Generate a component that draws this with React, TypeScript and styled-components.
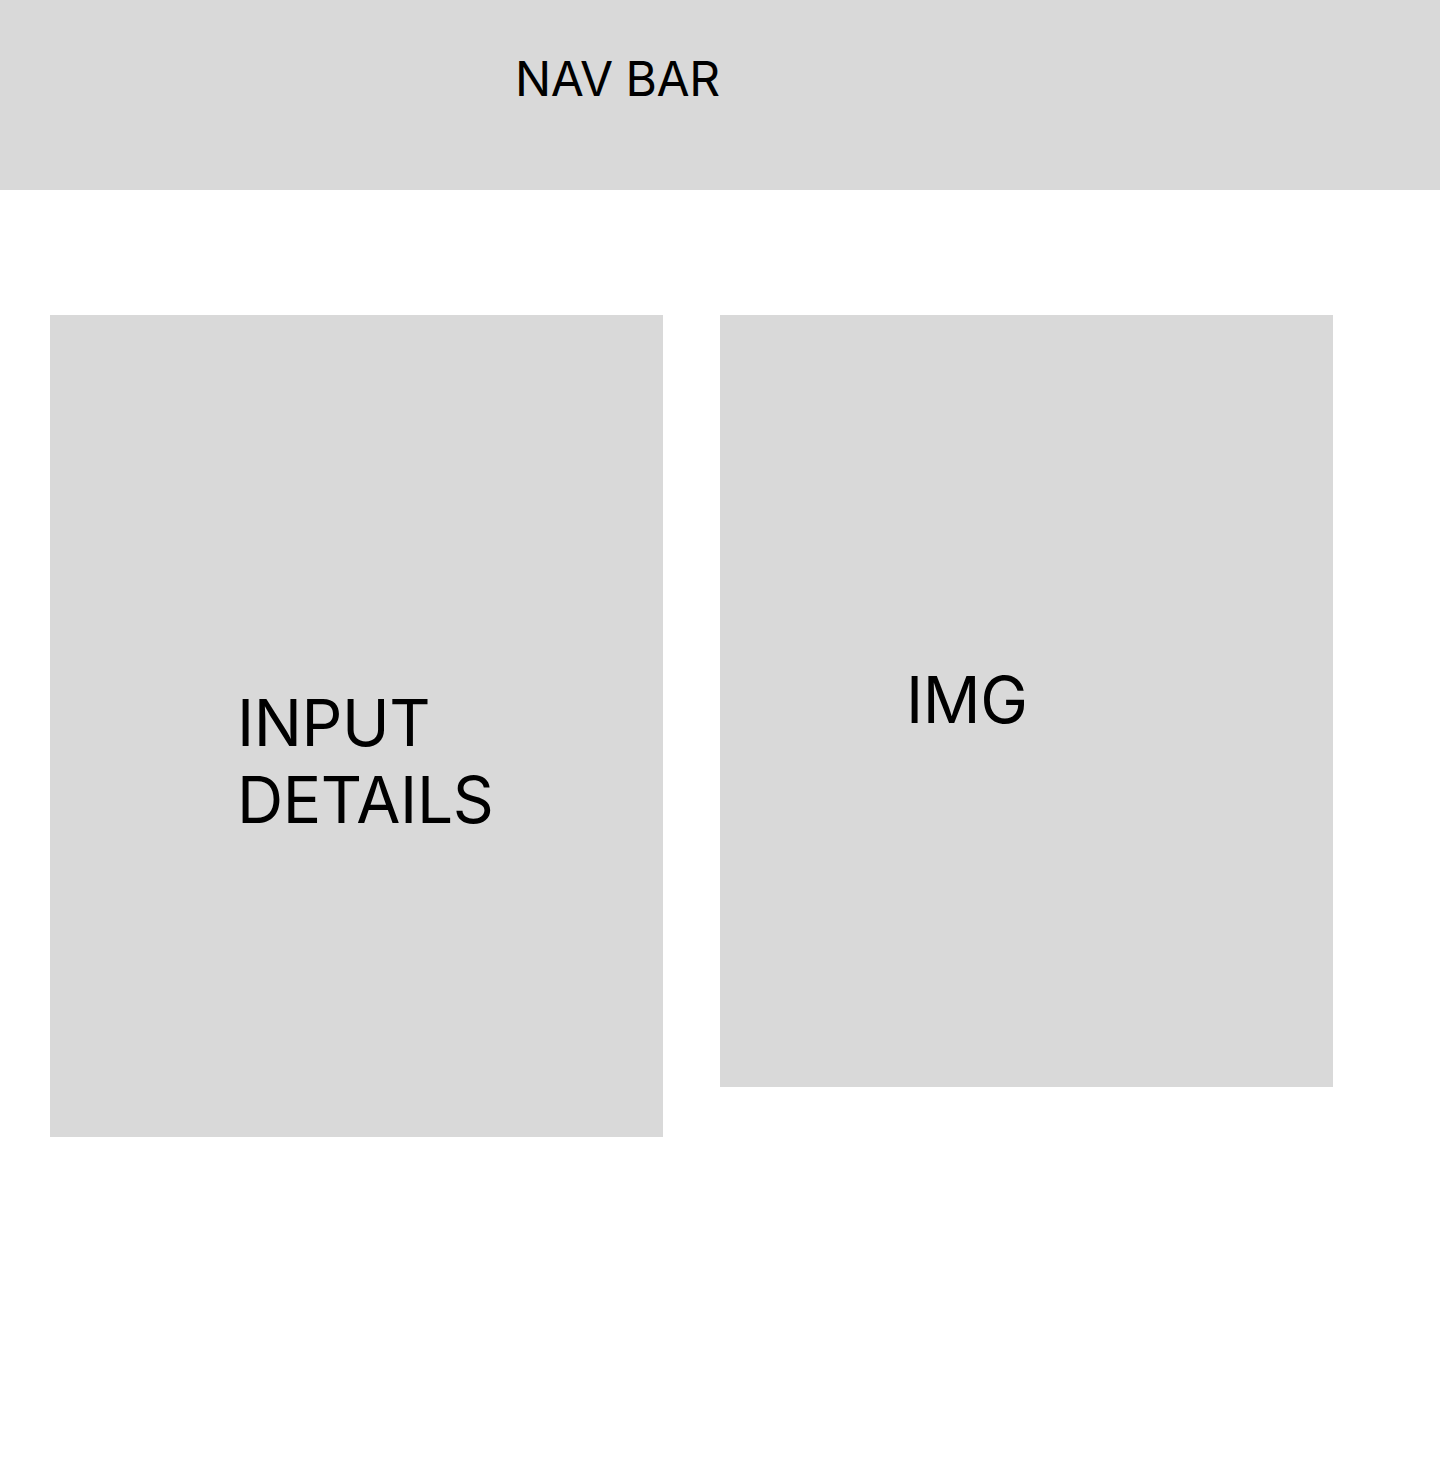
import React from "react";
import styled, { createGlobalStyle } from "styled-components";

const GlobalStyle = createGlobalStyle`
  html, body {
    margin: 0;
    padding: 0;
    background: #ffffff;
  }
  body {
    font-family: Inter, "Liberation Sans", sans-serif;
    color: #000000;
  }
`;

const Page = styled.div`
  width: 1440px;
  min-height: 1465px;
  background: #ffffff;
`;

const NavBar = styled.header`
  height: 190px;
  box-sizing: border-box;
  background: #d9d9d9;
  padding: 49px 0 0 515px;
`;

const NavTitle = styled.div`
  font-size: 48px;
  line-height: normal;
  font-weight: 400;
  letter-spacing: -0.5px;
`;

const Content = styled.main`
  display: flex;
  align-items: flex-start;
  gap: 57px;
  padding: 125px 0 0 50px;
`;

const Panel = styled.section<{ $height: number; $padTop: number; $padLeft: number }>`
  width: 613px;
  height: ${(p) => p.$height}px;
  box-sizing: border-box;
  background: #d9d9d9;
  padding: ${(p) => p.$padTop}px 0 0 ${(p) => p.$padLeft}px;
`;

const PanelLabel = styled.div`
  font-size: 64px;
  line-height: 1.2;
  font-weight: 400;
  letter-spacing: -0.4px;
  width: 300px;
`;

const App: React.FC = () => {
  return (
    <Page>
      <GlobalStyle />
      <NavBar>
        <NavTitle>NAV BAR</NavTitle>
      </NavBar>
      <Content>
        <Panel $height={822} $padTop={370} $padLeft={187}>
          <PanelLabel>INPUT DETAILS</PanelLabel>
        </Panel>
        <Panel $height={772} $padTop={347} $padLeft={186}>
          <PanelLabel>IMG</PanelLabel>
        </Panel>
      </Content>
    </Page>
  );
};

export default App;
